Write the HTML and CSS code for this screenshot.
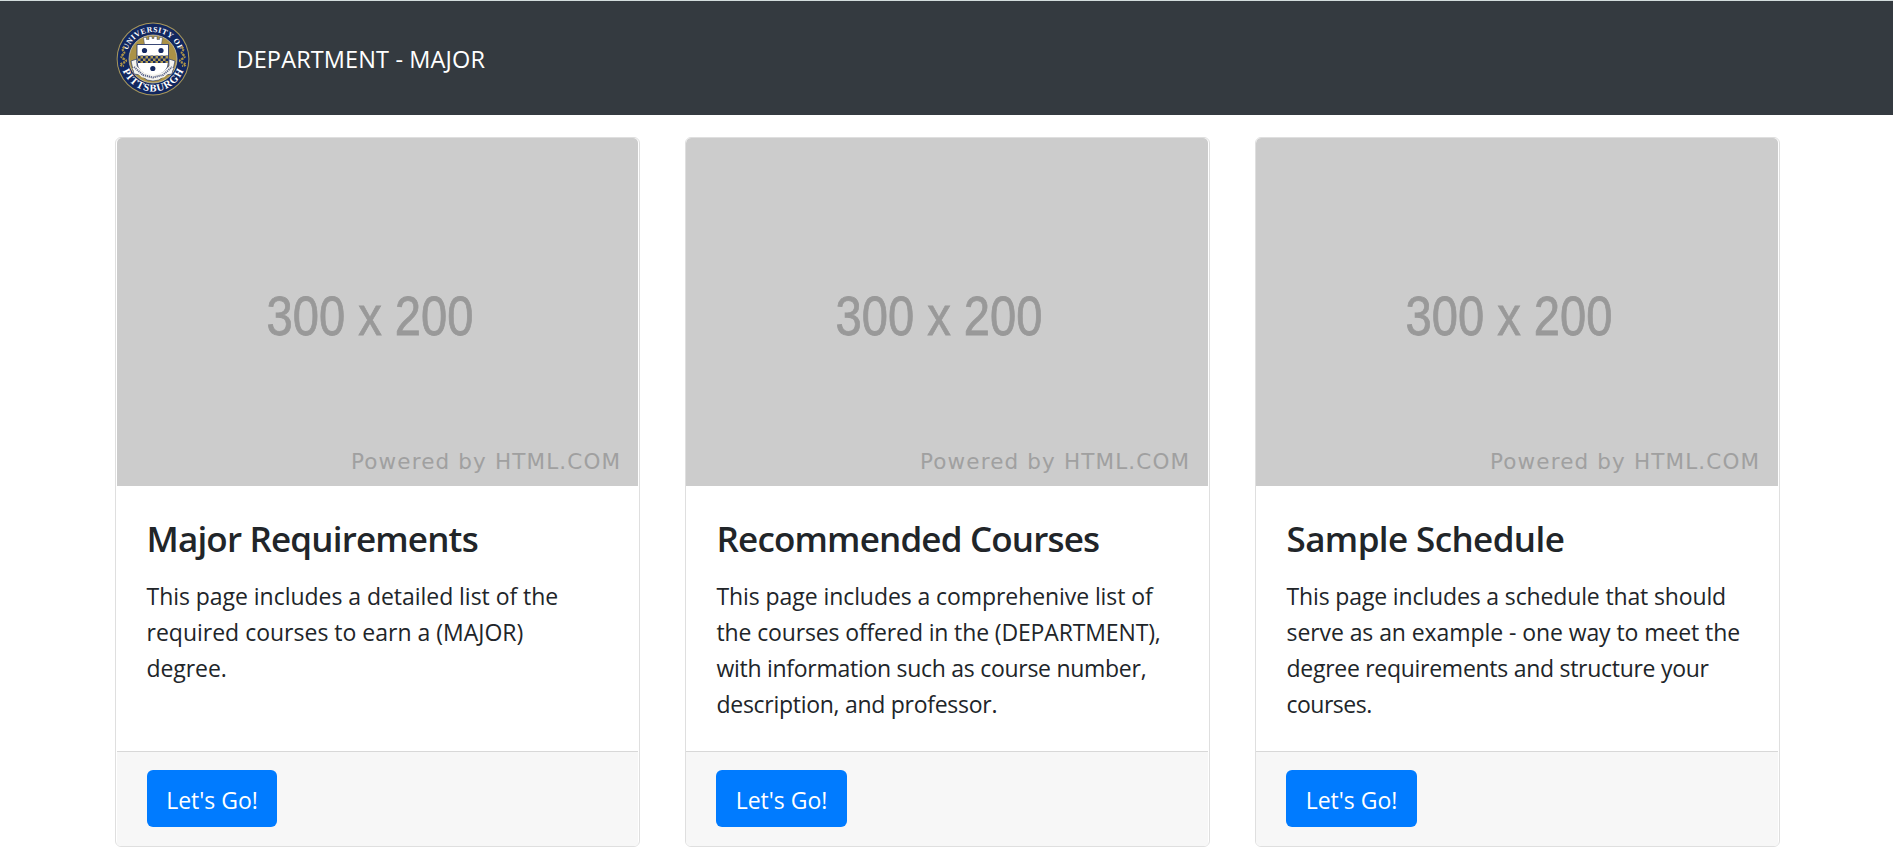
FILE: index.html
```html
<!DOCTYPE html>
<html lang="en">
<head>
<meta charset="utf-8">
<title>Department - Major</title>
<link rel="stylesheet" href="styles.css">
</head>
<body>
<nav class="navbar">
  <svg class="seal" viewBox="0 0 74 74" role="img" aria-label="University of Pittsburgh">
    <defs>
      <path id="arc-top" d="M10 37 A27 27 0 0 1 64 37"/>
      <path id="arc-bottom" d="M4.500 37 A32.500 32.500 0 0 0 69.500 37"/>
      <pattern id="checks" width="5" height="5" patternUnits="userSpaceOnUse" x="22" y="34">
        <rect width="5" height="5" fill="#b09a50"/><rect width="2.5" height="2.5" fill="#162a63"/><rect x="2.5" y="2.5" width="2.5" height="2.5" fill="#162a63"/>
      </pattern>
    </defs>
    <circle cx="37" cy="37" r="36.4" fill="#a8975a"/>
    <circle cx="37" cy="37" r="35.4" fill="#12275f"/>
    <circle cx="37" cy="37" r="24" fill="#ab9247" stroke="#d8d2b8" stroke-width=".7"/>
    <text class="seal-top"><textPath href="#arc-top" startOffset="50%" text-anchor="middle" textLength="67">UNIVERSITY OF</textPath></text>
    <text class="seal-bottom"><textPath href="#arc-bottom" startOffset="50%" text-anchor="middle" textLength="78">PITTSBURGH</textPath></text>
    <path d="M8.500 25q-3 2-1 4t-1 4 1.500 4-1 4 1 3M65.500 25q3 2 1 4t1 4-1.500 4 1 4-1 3" fill="none" stroke="#ab9247" stroke-width="2.200" stroke-dasharray="2 .8"/>
    <path d="M28.500 22.500l-1-7h3v2h2.500v-3h3v2h2v-2h3v3h2.500v-2h3l-1 7z" fill="#fff" stroke="#162a63" stroke-width=".4"/>
    <path d="M15 39l6-2v8l16 11 16-11v-8l6 2-3 13-7 1-6 5-6 1-6-1-6-5-7-1z" fill="#f4f3ee" stroke="#162a63" stroke-width=".6"/>
    <path d="M21 22.500h31.500V40q0 11-15.750 15Q21 51 21 40z" fill="#fff" stroke="#162a63" stroke-width=".8"/>
    <rect x="21.500" y="33.500" width="30.500" height="7.500" fill="url(#checks)"/>
    <g fill="#162a63"><circle cx="28.500" cy="28.500" r="2.600"/><circle cx="45" cy="28.500" r="2.600"/><circle cx="36.800" cy="46.500" r="2.600"/></g>
    <path d="M18 45l9 8 10 2.500 10-2.500 9-8" fill="none" stroke="#f4f3ee" stroke-width="5"/>
    <path d="M18 45l9 8 10 2.500 10-2.500 9-8" fill="none" stroke="#5b658a" stroke-width="2" stroke-dasharray="1.200 .8"/>
  </svg>
  <span class="brand">DEPARTMENT - MAJOR</span>
</nav>
<main class="cards">
  <article class="card card-inset">
    <svg class="placeholder" viewBox="0 0 521 348"><text class="size" x="149.500" y="197" textLength="207" lengthAdjust="spacingAndGlyphs">300 x 200</text><text class="powered" x="234" y="331" textLength="269">Powered by HTML.COM</text></svg>
    <div class="card-body"><h2 class="title">Major Requirements</h2>
      <p class="copy"><span class="t0">This page includes a detailed list of the</span><br>required courses to earn a (MAJOR)<br><span class="t1">degree.</span></p></div>
    <footer class="card-footer"><a class="btn">Let's Go!</a></footer>
  </article>
  <article class="card">
    <svg class="placeholder" viewBox="0 0 522 348"><text class="size" x="149.500" y="197" textLength="207" lengthAdjust="spacingAndGlyphs">300 x 200</text><text class="powered" x="234" y="331" textLength="269">Powered by HTML.COM</text></svg>
    <div class="card-body"><h2 class="title">Recommended Courses</h2>
      <p class="copy"><span class="t1">This page includes a comprehenive list of</span><br><span class="t2">the courses offered in the (DEPARTMENT),</span><br><span class="t3">with information such as course number,</span><br><span class="t3">description, and professor.</span></p></div>
    <footer class="card-footer"><a class="btn">Let's Go!</a></footer>
  </article>
  <article class="card">
    <svg class="placeholder" viewBox="0 0 522 348"><text class="size" x="149.500" y="197" textLength="207" lengthAdjust="spacingAndGlyphs">300 x 200</text><text class="powered" x="234" y="331" textLength="269">Powered by HTML.COM</text></svg>
    <div class="card-body"><h2 class="title title-wide">Sample Schedule</h2>
      <p class="copy"><span class="t2">This page includes a schedule that should</span><br><span class="t1">serve as an example - one way to meet the</span><br><span class="t3">degree requirements and structure your</span><br><span class="t4">courses.</span></p></div>
    <footer class="card-footer"><a class="btn">Let's Go!</a></footer>
  </article>
</main>
</body>
</html>
```
FILE: styles.css
```css
* { box-sizing: border-box; }
body { margin: 0; background: #fff; color: #212529; font: 24px/36px "Open Sans", "Noto Sans", sans-serif; overflow: hidden; }
.navbar { display: flex; align-items: center; height: 115px; padding: 1px 0 0 115.5px; background: #343a40; border-top: 1px solid #d3dcdd; }
.seal { width: 74px; height: 74px; flex: none; }
.seal-top { font: 700 7.800px "Liberation Serif", serif; fill: #fff; }
.seal-bottom { font: 700 10.500px "Liberation Serif", serif; fill: #fff; }
.brand { margin-left: 47px; padding-top: 1px; color: #fff; font-size: 23.500px; letter-spacing: .13px; white-space: nowrap; }
.cards { display: grid; grid-template-columns: repeat(3, 525px); gap: 45px; margin: 22px 0 0 115px; height: 710px; }
.card { display: flex; flex-direction: column; border: 1px solid #dfdfdf; border-radius: 6px; background: #fff; overflow: hidden; white-space: nowrap; padding-right: 1px; }
.placeholder { display: block; width: 100%; height: 348px; background: #ccc; flex: none; border-radius: 5px 5px 0 0; }
.card-inset .placeholder, .card-inset .card-footer { margin-left: 1px; width: 521px; }
.size { font: 55.500px "Liberation Sans", Arial, sans-serif; fill: #999; stroke: #999; stroke-width: .8px; }
.powered { font: 21.500px "DejaVu Sans", sans-serif; fill: #a0a0a0; }
.card-body { flex: 1; padding: 31px 30.5px 0; }
.title { margin: 0 0 18px; font-size: 35px; line-height: 43px; font-weight: 600; letter-spacing: -.82px; }
.title-wide { letter-spacing: -.6px; }
.copy { margin: 0; font-size: 23px; }
.t0 { letter-spacing: -.04px; }
.t1 { letter-spacing: -.08px; }
.t2 { letter-spacing: -.14px; }
.t3 { letter-spacing: -.28px; }
.t4 { letter-spacing: -.5px; }
.card-footer { flex: none; height: 95px; padding: 18px 30px; background: #f7f7f7; border-top: 1px solid #d8d8d8; }
.btn { display: block; width: 131px; height: 57px; border-radius: 6px; background: #007bff; color: #fff; font-size: 23px; line-height: 61px; text-align: center; }
.card-inset .btn { width: 130px; }
```
